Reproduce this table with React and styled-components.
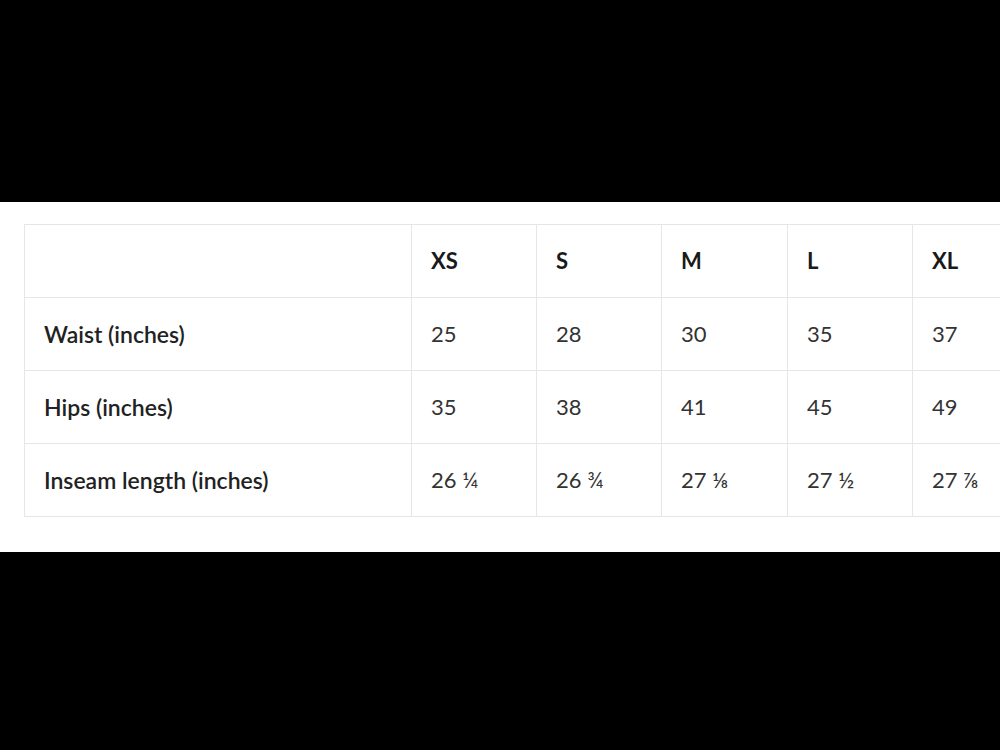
import styled, { createGlobalStyle } from 'styled-components';

const GlobalStyle = createGlobalStyle`
  html, body {
    margin: 0;
    padding: 0;
    background: #000;
    height: 750px;
    overflow: hidden;
  }
`;

const sizes = ['XS', 'S', 'M', 'L', 'XL'];
const widths = [387, 125, 125, 126, 125, 125];

const rows = [
  { label: 'Waist (inches)', values: ['25', '28', '30', '35', '37'] },
  { label: 'Hips (inches)', values: ['35', '38', '41', '45', '49'] },
  { label: 'Inseam length (inches)', values: ['26 ¼', '26 ¾', '27 ⅛', '27 ½', '27 ⅞'] },
];

function App() {
  return (
    <>
      <GlobalStyle />
      <Page>
        <Band />
        <Sheet>
          <Table>
            <colgroup>
              {widths.map((w, i) => (
                <Col key={i} $w={w} />
              ))}
            </colgroup>
            <thead>
              <tr>
                <HeadCell />
                {sizes.map((size) => (
                  <HeadCell key={size}>{size}</HeadCell>
                ))}
              </tr>
            </thead>
            <tbody>
              {rows.map((row) => (
                <tr key={row.label}>
                  <LabelCell>{row.label}</LabelCell>
                  {row.values.map((value, i) => (
                    <ValueCell key={i}>{value}</ValueCell>
                  ))}
                </tr>
              ))}
            </tbody>
          </Table>
        </Sheet>
        <Band $grow />
      </Page>
    </>
  );
}

export default App;

const Page = styled.div`
  width: 1000px;
  height: 750px;
  display: flex;
  flex-direction: column;
  overflow: hidden;
  font-family: Lato, 'Liberation Sans', sans-serif;
`;

const Band = styled.div`
  background: #000;
  height: ${(p) => (p.$grow ? 'auto' : '202px')};
  flex: ${(p) => (p.$grow ? '1' : 'none')};
`;

const Sheet = styled.div`
  background: #fff;
  padding: 22px 0 35px 24px;
  overflow: hidden;
`;

const Table = styled.table`
  border-collapse: collapse;
  table-layout: fixed;
  width: 1013px;
  color: #222;
`;

const Col = styled.col`
  width: ${(p) => p.$w}px;
`;

const Cell = styled.td`
  border: 1px solid #e6e6e6;
  height: 73px;
  padding: 0 0 0 19px;
  box-sizing: border-box;
  font-size: 22px;
  line-height: 1;
  text-align: left;
  vertical-align: middle;
  white-space: nowrap;
`;

const HeadCell = styled(Cell).attrs({ as: 'th' })`
  font-weight: 700;
  color: #1a1a1a;
`;

const LabelCell = styled(Cell)`
  font-size: 23px;
  font-weight: 600;
  color: #222;
`;

const ValueCell = styled(Cell)`
  font-weight: 400;
  color: #333;
`;
